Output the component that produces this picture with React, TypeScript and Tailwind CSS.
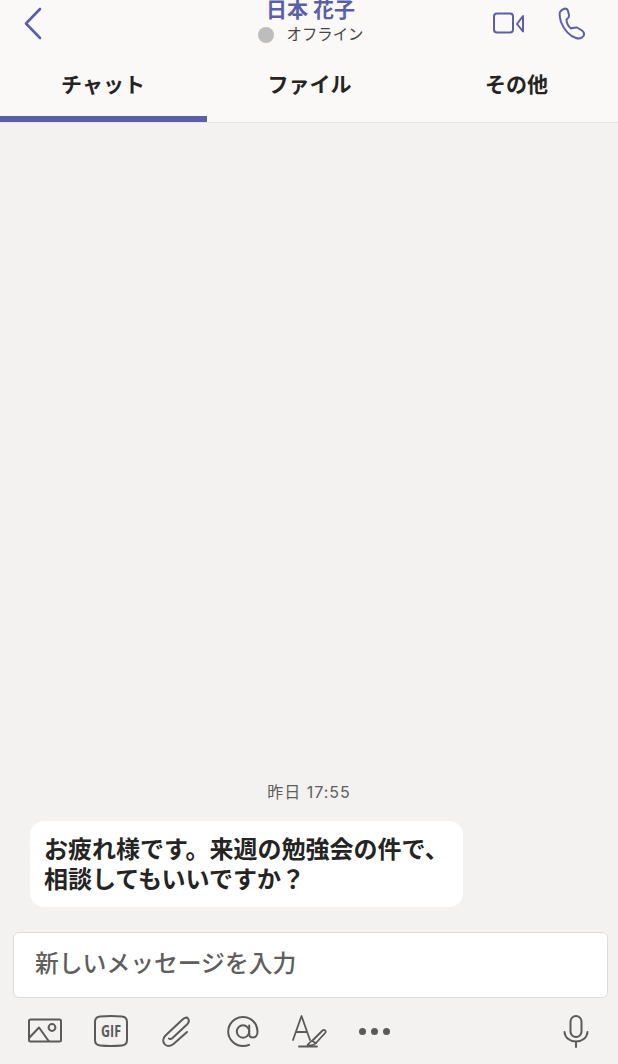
const jp = { fontFamily: '"Inter", "Noto Sans CJK JP", sans-serif' };

function ToolbarIcons() {
  return (
    <div className="flex h-[66px] items-center text-[#5b5a59]">
      <svg className="ml-[28px] h-[26px] w-[34px]" viewBox="0 0 34 26" fill="none" stroke="currentColor" strokeWidth="2" strokeLinejoin="round">
        <rect x="1" y="1.5" width="32" height="22" rx="1.5" />
        <path d="M1 20 L11 9.5 L21 23.5" />
        <circle cx="24" cy="9.5" r="3.4" />
      </svg>
      <svg className="ml-[32px] h-[32px] w-[34px]" viewBox="0 0 34 32" fill="none">
        <path d="M6 1.5 Q17 0.5 28 1.5 Q33 2 33 7 V25 Q33 30 28 30.5 Q17 31.5 6 30.5 Q1 30 1 25 V7 Q1 2 6 1.5Z" stroke="currentColor" strokeWidth="2" />
        <text x="17" y="22" textAnchor="middle" fill="currentColor" fontSize="16" fontWeight="700" textLength="20" lengthAdjust="spacingAndGlyphs" fontFamily="Open Sans, sans-serif">GIF</text>
      </svg>
      <svg className="ml-[34px] h-[31px] w-[28px]" viewBox="0 0 28 31" fill="none" stroke="currentColor" strokeWidth="2" strokeLinecap="round">
        <path d="M25 16 L11.5 28 C8.5 30.5 4.5 30.5 2.5 28 C0.5 25.5 1 22 3.5 19.5 L20.5 3.5 C22.5 1.5 25 1 26 2.5 C27.5 4.5 27 6.5 25 8.5 L10.5 22 C9 23.3 7.5 23.3 7 22.5" />
      </svg>
      <svg className="ml-[37px] h-[31px] w-[32px]" viewBox="0 0 32 31" fill="none" stroke="currentColor" strokeWidth="2" strokeLinecap="round">
        <circle cx="16" cy="15.5" r="6.2" />
        <path d="M22.2 9.5 V18 C22.2 20.5 24 21.5 26 21.5 C29 21.5 30.5 18.5 30.5 15.5 C30.5 7.5 24 1 16 1 C8 1 1.2 7.5 1.2 15.5 C1.2 23.5 8 30 16 30 C18.5 30 20.5 29.5 22 28.8" />
      </svg>
      <svg className="ml-[33px] h-[33px] w-[36px]" viewBox="0 0 36 33" fill="none" stroke="currentColor" strokeWidth="1.8" strokeLinecap="round" strokeLinejoin="round">
        <path d="M1 25 L9.5 1 L18 25 M4 17 H15" />
        <path d="M7 31.5 H25" />
        <path d="M20 26 L30.5 15.5 C32 14 34.5 15.5 33.5 17.5 L24 28 Z" />
        <path d="M20 26 C18 26.5 16.5 28.5 15.5 30 C18 30.5 22 30.5 24 28" />
      </svg>
      <div className="ml-[31px] flex gap-[5px]">
        <span className="h-[7px] w-[7px] rounded-full bg-[#5b5a59]" />
        <span className="h-[7px] w-[7px] rounded-full bg-[#5b5a59]" />
        <span className="h-[7px] w-[7px] rounded-full bg-[#5b5a59]" />
      </div>
      <svg className="ml-auto mr-[29px] h-[33px] w-[26px]" viewBox="0 0 26 33" fill="none" stroke="currentColor" strokeWidth="2" strokeLinecap="round">
        <rect x="7.5" y="1" width="11" height="21" rx="5.5" />
        <path d="M1.5 17 C2 23 7 26.5 13 26.5 C19 26.5 24 23 24.5 17 M13 26.5 V32" />
      </svg>
    </div>
  );
}

export default function App() {
  return (
    <div className="flex h-[1064px] w-[618px] flex-col overflow-hidden bg-[#f3f2f1]" style={jp}>
      <header className="relative h-[123px] shrink-0 border-b border-[#e6e5e4] bg-[#faf9f8]">
        <div className="grid h-[69px] grid-cols-[1fr_auto_1fr] items-start">
          <svg className="ml-[23px] mt-[7px] h-[33px] w-[20px] text-[#5b5fa7]" viewBox="0 0 20 33" fill="none" stroke="currentColor" strokeWidth="2.6" strokeLinecap="round" strokeLinejoin="round">
            <path d="M17 2 L3 16.5 L17 31" />
          </svg>
          <div className="ml-[3px] flex flex-col items-center">
            <div className="-mt-[3px] text-[21px] leading-[26px] font-bold text-[#5b5fa7]">日本 花子</div>
            <div className="flex items-center">
              <span className="h-[16px] w-[16px] rounded-full bg-[#bdbdbd]" />
              <span className="ml-[13px] text-[15.4px] leading-[24px] text-[#484644]">オフライン</span>
            </div>
          </div>
          <div className="flex justify-end pr-[32px]">
            <svg className="mt-[12px] h-[22px] w-[33px] text-[#5b5fa7]" viewBox="0 0 33 22" fill="none" stroke="currentColor" strokeWidth="2" strokeLinejoin="round">
              <rect x="2" y="1.5" width="19" height="19" rx="3" />
              <path d="M31 4 V19.5 L25 12 Z" />
            </svg>
            <svg className="ml-[33px] mt-[7px] h-[33px] w-[28px] text-[#5b5fa7]" viewBox="0 0 28 33" fill="none" stroke="currentColor" strokeWidth="2" strokeLinejoin="round">
              <path d="M2 5 C3 3 5 2 7 1.5 C8.5 1.5 9.5 2.5 10 4 L11 8 C11.5 10 10 11.5 8.5 12.5 C8.5 15 10 19 13 21.5 C15 21 17 20 19 20.5 L24 23.5 C26 25 26.5 27 25.5 29 C24 31 21 32 18 31 C12 29.5 6 23 3 15 C2 11 1 8 2 5Z" />
            </svg>
          </div>
        </div>
        <nav className="grid grid-cols-3 text-[21px] font-bold text-[#252423]">
          <div className="h-[47px] pt-[2px] text-center leading-[28px]">チャット</div>
          <div className="h-[47px] pl-[1px] pt-[2px] text-center leading-[28px]">ファイル</div>
          <div className="h-[47px] pl-[3px] pt-[2px] text-center leading-[28px]">その他</div>
        </nav>
        <div className="absolute bottom-0 left-0 h-[6px] w-[207px] bg-[#5b5fa7]" />
      </header>

      <main className="flex flex-1 flex-col justify-end">
        <div className="text-center text-[16px] leading-[24px] tracking-[1px] text-[#605e5c]">昨日 17:55</div>
        <div className="ml-[30px] mt-[17px] h-[86px] w-[433px] rounded-[14px] bg-white px-[14px] py-[14px] text-[24px] leading-[30px] font-bold text-[#252423]">
          お疲れ様です。来週の勉強会の件で、
          <br />
          相談してもいいですか？
        </div>
        <div className="ml-[13px] mr-[10px] mt-[25px] flex h-[66px] items-center rounded-[6px] border border-[#dedcda] bg-white pb-[3px] pl-[21px] text-[23.8px] font-medium text-[#605e5c]">
          新しいメッセージを入力
        </div>
      </main>
      <ToolbarIcons />
    </div>
  );
}
